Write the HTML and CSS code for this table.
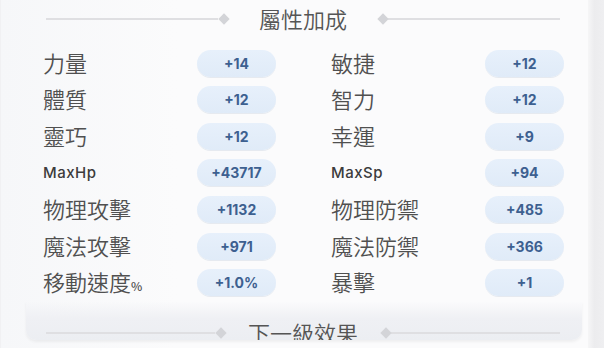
FILE: index.html
```html
<!DOCTYPE html>
<html lang="zh-Hant">
<head>
<meta charset="utf-8">
<title>屬性加成</title>
<link rel="stylesheet" href="styles.css">
</head>
<body>
<div class="screen">
  <div class="main">
    <div class="divider divider-top">
      <span class="line"></span><span class="diamond"></span>
      <span class="title">屬性加成</span>
      <span class="diamond"></span><span class="line"></span>
    </div>
    <div class="stats">
      <div class="stat"><span class="label">力量</span><span class="pill">+14</span></div>
      <div class="stat"><span class="label">敏捷</span><span class="pill">+12</span></div>
      <div class="stat"><span class="label">體質</span><span class="pill">+12</span></div>
      <div class="stat"><span class="label">智力</span><span class="pill">+12</span></div>
      <div class="stat"><span class="label">靈巧</span><span class="pill">+12</span></div>
      <div class="stat"><span class="label">幸運</span><span class="pill">+9</span></div>
      <div class="stat"><span class="label latin">MaxHp</span><span class="pill">+43717</span></div>
      <div class="stat"><span class="label latin">MaxSp</span><span class="pill">+94</span></div>
      <div class="stat"><span class="label">物理攻擊</span><span class="pill">+1132</span></div>
      <div class="stat"><span class="label">物理防禦</span><span class="pill">+485</span></div>
      <div class="stat"><span class="label">魔法攻擊</span><span class="pill">+971</span></div>
      <div class="stat"><span class="label">魔法防禦</span><span class="pill">+366</span></div>
      <div class="stat"><span class="label">移動速度<small class="pct">%</small></span><span class="pill">+1.0%</span></div>
      <div class="stat"><span class="label">暴擊</span><span class="pill">+1</span></div>
    </div>
    <div class="card">
      <div class="divider divider-bottom">
        <span class="line"></span><span class="diamond"></span>
        <span class="title">下一級效果</span>
        <span class="diamond"></span><span class="line"></span>
      </div>
    </div>
  </div>
  <div class="strip"></div>
</div>
</body>
</html>
```

FILE: styles.css
```css
html, body {
  margin: 0;
  padding: 0;
}
body {
  width: 604px;
  height: 348px;
  overflow: hidden;
  background: #fbfbfc;
  font-family: "Noto Sans CJK TC", "Noto Sans", sans-serif;
}
.screen {
  display: flex;
  height: 348px;
}
.main {
  flex: 1;
  display: flex;
  flex-direction: column;
  background: linear-gradient(to right, #f6f7f9 0%, #fbfbfc 30%, #fbfbfc 100%);
  border-left: 1px solid #f1f1f3;
}
.strip {
  width: 16px;
  background: linear-gradient(to right, #f6f6f7 0%, #ececee 40%, #efeff1 100%);
}
.divider {
  display: flex;
  align-items: center;
  height: 38px;
}
.divider-top {
  margin: 0 28px 0 45px;
}
.line {
  flex: 1;
  height: 2px;
  background: #dfdfe2;
}
.diamond {
  width: 8px;
  height: 8px;
  margin: 0 1.5px;
  background: #d3d4d8;
  transform: rotate(45deg);
  flex: none;
}
.title {
  font-size: 22px;
  font-weight: 350;
  line-height: 1;
  padding-bottom: 2px;
  color: #555;
  white-space: nowrap;
}
.divider-top .title {
  margin: 0 30px;
}
.stats {
  margin: 6.7px 0 0 42px;
  display: grid;
  grid-template-columns: 233px 233px;
  column-gap: 55px;
  grid-auto-rows: 36.67px;
}
.stat {
  display: flex;
  align-items: center;
}
.label {
  flex: 1;
  font-size: 22px;
  font-weight: 350;
  line-height: 1;
  padding-bottom: 3px;
  color: #505050;
  white-space: nowrap;
}
.label.latin {
  font-family: "Inter", "Noto Sans", sans-serif;
  font-size: 15px;
  font-weight: 500;
  letter-spacing: 0.5px;
  padding-bottom: 1px;
  color: #3c3c3c;
}
.pct {
  font-size: 12px;
  font-weight: 500;
}
.pill {
  width: 79px;
  height: 27px;
  border-radius: 14px;
  background: linear-gradient(to bottom, #e7f0fb, #e0ebf8);
  box-shadow: 0 1px 0 rgba(140, 160, 190, 0.18);
  display: flex;
  align-items: center;
  justify-content: center;
  font-family: "Inter", "Noto Sans", sans-serif;
  font-weight: 700;
  font-size: 14px;
  color: #3d6090;
}
.card {
  margin: 0 0 0 25px;
  width: 556px;
  height: 39px;
  overflow: hidden;
  border-radius: 0 0 10px 10px;
  background: linear-gradient(to bottom, rgba(240, 241, 245, 0) 0%, #eff0f4 45%, #eceef2 100%);
  box-shadow: 0 2px 3px rgba(0, 0, 0, 0.05);
}
.divider-bottom {
  margin: 13px 22px 0 20px;
}
.divider-bottom .title {
  margin: 0 22px;
}
```
